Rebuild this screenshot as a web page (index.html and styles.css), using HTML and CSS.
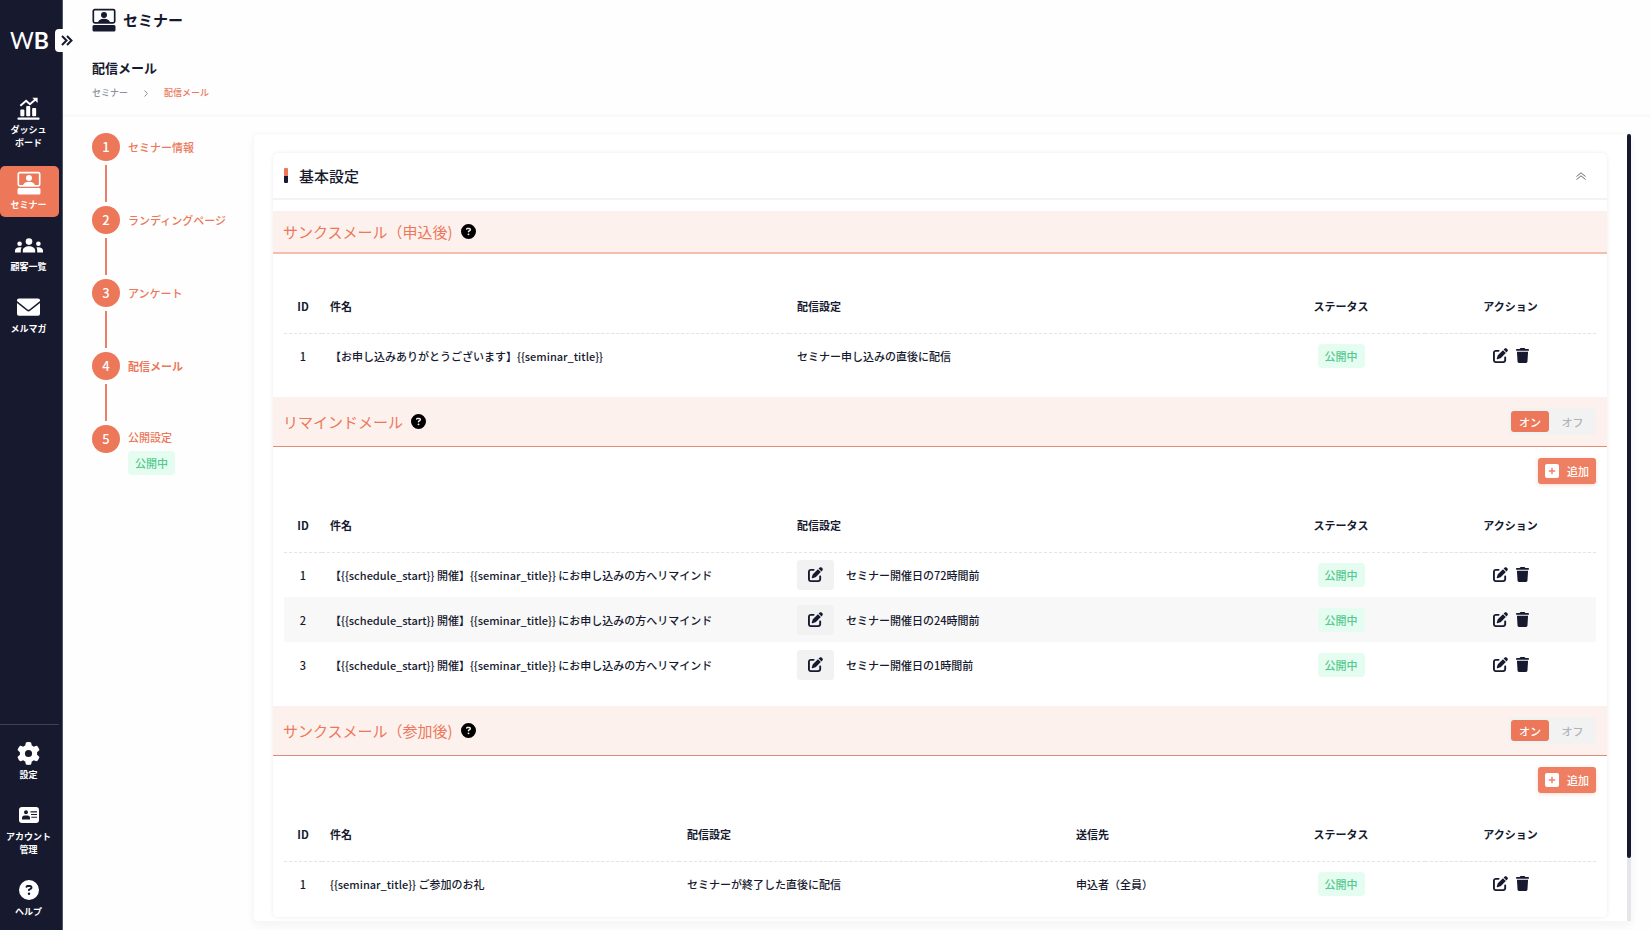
FILE: index.html
```html
<!DOCTYPE html>
<html lang="ja">
<head>
<meta charset="utf-8">
<meta name="viewport" content="width=device-width, initial-scale=1">
<title>配信メール</title>
<link rel="stylesheet" href="styles.css">
</head>
<body>
<svg class="sprite" aria-hidden="true">
  <symbol id="i-edit" viewBox="0 0 512 512"><path d="M471.6 21.7c-21.9-21.9-57.3-21.9-79.2 0L362.3 51.7l97.9 97.9 30.1-30.1c21.9-21.9 21.9-57.3 0-79.2L471.6 21.7zm-299.2 220c-6.1 6.1-10.8 13.6-13.5 21.9l-29.6 88.8c-2.9 8.6-.6 18.1 5.8 24.6s15.9 8.7 24.6 5.8l88.8-29.6c8.2-2.7 15.7-7.4 21.9-13.5L437.7 172.3 339.7 74.3 172.4 241.7zM96 64C43 64 0 107 0 160V416c0 53 43 96 96 96H352c53 0 96-43 96-96V320c0-17.7-14.3-32-32-32s-32 14.3-32 32v96c0 17.7-14.3 32-32 32H96c-17.7 0-32-14.3-32-32V160c0-17.7 14.3-32 32-32h96c17.7 0 32-14.3 32-32s-14.3-32-32-32H96z"/></symbol>
  <symbol id="i-trash" viewBox="0 0 448 512"><path d="M135.2 17.7L128 32H32C14.3 32 0 46.3 0 64S14.3 96 32 96H416c17.7 0 32-14.3 32-32s-14.3-32-32-32H320l-7.2-14.3C307.4 6.8 296.3 0 284.2 0H163.8c-12.1 0-23.2 6.8-28.6 17.7zM416 128H32L53.2 467c1.6 25.3 22.6 45 47.9 45H346.9c25.3 0 46.3-19.7 47.9-45L416 128z"/></symbol>
  <symbol id="i-gear" viewBox="0 0 512 512"><path d="M495.9 166.6c3.2 8.7 .5 18.4-6.4 24.6l-43.3 39.4c1.1 8.3 1.7 16.8 1.7 25.4s-.6 17.1-1.7 25.4l43.3 39.4c6.9 6.2 9.6 15.9 6.4 24.6c-4.4 11.9-9.7 23.3-15.8 34.3l-4.7 8.1c-6.6 11-14 21.4-22.1 31.2c-5.9 7.2-15.7 9.6-24.5 6.8l-55.7-17.7c-13.4 10.3-28.2 18.9-44 25.4l-12.5 57.1c-2 9.1-9 16.3-18.2 17.8c-13.8 2.3-28 3.5-42.5 3.5s-28.7-1.2-42.5-3.5c-9.2-1.5-16.2-8.7-18.2-17.8l-12.5-57.1c-15.8-6.5-30.6-15.1-44-25.4L83.1 425.9c-8.8 2.8-18.6 .3-24.5-6.8c-8.1-9.8-15.5-20.2-22.1-31.2l-4.7-8.1c-6.1-11-11.4-22.4-15.8-34.3c-3.2-8.7-.5-18.4 6.4-24.6l43.3-39.4C64.6 273.1 64 264.6 64 256s.6-17.1 1.7-25.4L22.4 191.2c-6.9-6.2-9.6-15.9-6.4-24.6c4.4-11.9 9.7-23.3 15.8-34.3l4.7-8.1c6.6-11 14-21.4 22.1-31.2c5.9-7.2 15.7-9.6 24.5-6.8l55.7 17.7c13.4-10.3 28.2-18.9 44-25.4l12.5-57.1c2-9.1 9-16.3 18.2-17.8C227.3 1.2 241.5 0 256 0s28.7 1.2 42.5 3.5c9.2 1.5 16.2 8.7 18.2 17.8l12.5 57.1c15.8 6.5 30.6 15.1 44 25.4l55.7-17.7c8.8-2.8 18.6-.3 24.5 6.8c8.1 9.8 15.5 20.2 22.1 31.2l4.7 8.1c6.1 11 11.4 22.4 15.8 34.3zM256 336a80 80 0 1 0 0-160 80 80 0 1 0 0 160z"/></symbol>
  <symbol id="i-help" viewBox="0 0 512 512"><path d="M256 512A256 256 0 1 0 256 0a256 256 0 1 0 0 512zM169.8 165.3c7.9-22.3 29.1-37.3 52.8-37.3h58.3c34.9 0 63.1 28.3 63.1 63.1c0 22.6-12.1 43.5-31.7 54.8L280 264.4c-.2 13-10.9 23.6-24 23.6c-13.3 0-24-10.7-24-24V250.5c0-8.6 4.6-16.5 12.1-20.8l44.3-25.4c4.7-2.7 7.6-7.7 7.6-13.1c0-8.4-6.8-15.1-15.1-15.1H222.6c-3.4 0-6.4 2.1-7.5 5.3l-.4 1.2c-4.4 12.5-18.2 19-30.6 14.6s-19-18.2-14.6-30.6l.4-1.2zM224 352a32 32 0 1 1 64 0 32 32 0 1 1 -64 0z"/></symbol>
  <symbol id="i-plus" viewBox="0 0 14 14"><path fill-rule="evenodd" d="M2 0h10a2 2 0 0 1 2 2v10a2 2 0 0 1-2 2H2a2 2 0 0 1-2-2V2a2 2 0 0 1 2-2zM6.3 3.8v2.5H3.8v1.4h2.5v2.5h1.4V7.7h2.5V6.3H7.7V3.8z"/></symbol>
  <symbol id="i-seminar" viewBox="0 0 24 24"><rect x="1.300" y="1.600" width="21.400" height="13.200" rx="1.500" fill="none" stroke="currentColor" stroke-width="1.700"/><circle cx="12" cy="6.900" r="3"/><path d="M5.800 15c.6-2.900 2.800-4.200 6.200-4.200s5.600 1.300 6.200 4.200z"/><rect x=".5" y="17" width="23" height="6.500" rx="1.500"/></symbol>
  <symbol id="i-chart" viewBox="0 0 24 24"><rect x="3.500" y="13" width="4.200" height="7" rx="1"/><rect x="9.600" y="9.500" width="4.200" height="10.500" rx="1"/><rect x="15.800" y="11.500" width="4.200" height="8.500" rx="1"/><rect x=".5" y="21.500" width="23" height="2.200" rx=".8"/><path d="M3.500 9.200l6-5.200 4 3.600 6-5.200" fill="none" stroke="currentColor" stroke-width="2"/><path d="M16 .8h5.500v5.500z"/></symbol>
  <symbol id="i-people" viewBox="0 0 28 15"><circle cx="14" cy="3.600" r="3.300"/><circle cx="4.600" cy="5.800" r="2.300"/><circle cx="23.400" cy="5.800" r="2.300"/><path d="M7.800 14.500v-2c0-2.600 2.800-4.200 6.200-4.200s6.200 1.600 6.200 4.200v2zM0 14.500v-2C0 10.500 2 9.200 4.600 9.200c.8 0 1.400.1 2 .3-.6 1-.8 2-.8 3v2zM28 14.500v-2c0-2-2-3.300-4.600-3.300-.8 0-1.400.1-2 .3.600 1 .8 2 .8 3v2z"/></symbol>
  <symbol id="i-mail" viewBox="0 0 24 18"><path d="M2 0h20a2 2 0 0 1 2 2v.8L12.900 11.600a1.500 1.500 0 0 1-1.800 0L0 2.800V2a2 2 0 0 1 2-2zM0 4.800l10.300 8.200a2.700 2.700 0 0 0 3.400 0L24 4.800V16a2 2 0 0 1-2 2H2a2 2 0 0 1-2-2z"/></symbol>
  <symbol id="i-card" viewBox="0 0 20 16"><path fill-rule="evenodd" d="M3 0h14a3 3 0 0 1 3 3v10a3 3 0 0 1-3 3H3a3 3 0 0 1-3-3V3a3 3 0 0 1 3-3zM7 3.300a2 2 0 1 0 0 4 2 2 0 0 0 0-4zM3 12.600h8V11a2.500 2.500 0 0 0-2.500-2.500h-3A2.500 2.500 0 0 0 3 11zM11.500 4.300v1.100H18V4.300zM12 7v1.100h6V7zM12.300 9.700v1.100H18V9.700z"/></symbol>
</svg>

<div class="app">
  <aside class="sidebar">
    <a class="logo" href="#"><span class="logo-thin">W</span><span class="logo-bold">B</span></a>
    <button class="sidebar-toggle" type="button" aria-label="メニューを開く">
      <svg viewBox="0 0 12 11" width="12" height="11" fill="none" stroke="currentColor" stroke-width="2"><path d="M1 1l4.500 4.500L1 10M6 1l4.500 4.500L6 10"/></svg>
    </button>
    <nav class="nav">
      <a class="nav-item" href="#"><span class="nav-icon"><svg width="23" height="23"><use href="#i-chart"/></svg></span>ダッシュ<br>ボード</a>
      <a class="nav-item active" href="#"><span class="nav-icon"><svg width="24" height="24"><use href="#i-seminar"/></svg></span>セミナー</a>
      <a class="nav-item" href="#"><span class="nav-icon"><svg width="28" height="15"><use href="#i-people"/></svg></span>顧客一覧</a>
      <a class="nav-item" href="#"><span class="nav-icon"><svg width="23" height="18"><use href="#i-mail"/></svg></span>メルマガ</a>
    </nav>
    <nav class="nav nav-bottom">
      <a class="nav-item" href="#"><span class="nav-icon"><svg width="23" height="23"><use href="#i-gear"/></svg></span>設定</a>
      <a class="nav-item" href="#"><span class="nav-icon"><svg width="20" height="16"><use href="#i-card"/></svg></span>アカウント<br>管理</a>
      <a class="nav-item" href="#"><span class="nav-icon"><svg width="20" height="20"><use href="#i-help"/></svg></span>ヘルプ</a>
    </nav>
  </aside>

  <div class="page">
    <header class="page-header">
      <div class="page-title"><svg width="24" height="24"><use href="#i-seminar"/></svg>セミナー</div>
      <h1>配信メール</h1>
      <nav class="crumbs">
        <a href="#">セミナー</a>
        <svg viewBox="0 0 4 7" width="4" height="7" fill="none" stroke="currentColor"><path d="M.5.5l3 3-3 3"/></svg>
        <a class="current" href="#">配信メール</a>
      </nav>
    </header>

    <div class="body">
      <ol class="steps">
        <li><span class="num">1</span><a href="#">セミナー情報</a></li>
        <li><span class="num">2</span><a href="#">ランディングページ</a></li>
        <li><span class="num">3</span><a href="#">アンケート</a></li>
        <li class="current"><span class="num">4</span><a href="#">配信メール</a></li>
        <li class="last"><span class="num">5</span><a href="#">公開設定</a><span class="badge">公開中</span></li>
      </ol>

      <main class="panel">
        <div class="panel-content">
          <div class="card">
            <div class="card-header">
              <span class="marker"></span>
              <h2>基本設定</h2>
              <button class="collapse" type="button" aria-label="折りたたむ">
                <svg viewBox="0 0 10 8" width="10" height="8" fill="none" stroke="currentColor"><path d="M.5 4.500L5 .8l4.500 3.700M.5 7.500L5 3.800l4.500 3.700"/></svg>
              </button>
            </div>

            <section>
              <div class="section-title short">
                <h3>サンクスメール（申込後)</h3>
                <svg class="help" width="15" height="15"><use href="#i-help"/></svg>
              </div>
              <div class="section-body">
                <table>
                  <colgroup><col class="c-id"><col class="c-subject"><col><col class="c-status"><col class="c-action"></colgroup>
                  <thead><tr><th class="mid">ID</th><th>件名</th><th>配信設定</th><th class="mid">ステータス</th><th class="mid">アクション</th></tr></thead>
                  <tbody>
                    <tr><td class="mid">1</td><td>【お申し込みありがとうございます】{{seminar_title}}</td><td>セミナー申し込みの直後に配信</td><td class="mid"><span class="badge">公開中</span></td><td class="mid"><div class="actions"><button type="button" aria-label="編集"><svg width="15" height="15"><use href="#i-edit"/></svg></button><button type="button" aria-label="削除"><svg width="13" height="15"><use href="#i-trash"/></svg></button></div></td></tr>
                  </tbody>
                </table>
              </div>
            </section>

            <section>
              <div class="section-title">
                <h3>リマインドメール</h3>
                <svg class="help" width="15" height="15"><use href="#i-help"/></svg>
                <div class="switch"><button class="on" type="button">オン</button><button type="button">オフ</button></div>
              </div>
              <div class="section-body with-add">
                <button class="add" type="button"><svg width="14" height="14"><use href="#i-plus"/></svg>追加</button>
                <table>
                  <colgroup><col class="c-id"><col class="c-subject"><col><col class="c-status"><col class="c-action"></colgroup>
                  <thead><tr><th class="mid">ID</th><th>件名</th><th>配信設定</th><th class="mid">ステータス</th><th class="mid">アクション</th></tr></thead>
                  <tbody>
                    <tr><td class="mid">1</td><td>【{{schedule_start}} 開催】{{seminar_title}} にお申し込みの方へリマインド</td><td><div class="timing"><button type="button" aria-label="配信設定を編集"><svg width="15" height="15"><use href="#i-edit"/></svg></button>セミナー開催日の72時間前</div></td><td class="mid"><span class="badge">公開中</span></td><td class="mid"><div class="actions"><button type="button" aria-label="編集"><svg width="15" height="15"><use href="#i-edit"/></svg></button><button type="button" aria-label="削除"><svg width="13" height="15"><use href="#i-trash"/></svg></button></div></td></tr>
                    <tr><td class="mid">2</td><td>【{{schedule_start}} 開催】{{seminar_title}} にお申し込みの方へリマインド</td><td><div class="timing"><button type="button" aria-label="配信設定を編集"><svg width="15" height="15"><use href="#i-edit"/></svg></button>セミナー開催日の24時間前</div></td><td class="mid"><span class="badge">公開中</span></td><td class="mid"><div class="actions"><button type="button" aria-label="編集"><svg width="15" height="15"><use href="#i-edit"/></svg></button><button type="button" aria-label="削除"><svg width="13" height="15"><use href="#i-trash"/></svg></button></div></td></tr>
                    <tr><td class="mid">3</td><td>【{{schedule_start}} 開催】{{seminar_title}} にお申し込みの方へリマインド</td><td><div class="timing"><button type="button" aria-label="配信設定を編集"><svg width="15" height="15"><use href="#i-edit"/></svg></button>セミナー開催日の1時間前</div></td><td class="mid"><span class="badge">公開中</span></td><td class="mid"><div class="actions"><button type="button" aria-label="編集"><svg width="15" height="15"><use href="#i-edit"/></svg></button><button type="button" aria-label="削除"><svg width="13" height="15"><use href="#i-trash"/></svg></button></div></td></tr>
                  </tbody>
                </table>
              </div>
            </section>

            <section>
              <div class="section-title">
                <h3>サンクスメール（参加後)</h3>
                <svg class="help" width="15" height="15"><use href="#i-help"/></svg>
                <div class="switch"><button class="on" type="button">オン</button><button type="button">オフ</button></div>
              </div>
              <div class="section-body with-add final">
                <button class="add" type="button"><svg width="14" height="14"><use href="#i-plus"/></svg>追加</button>
                <table>
                  <colgroup><col class="c-id"><col class="c-subject-narrow"><col class="c-delivery"><col><col class="c-status"><col class="c-action"></colgroup>
                  <thead><tr><th class="mid">ID</th><th>件名</th><th>配信設定</th><th>送信先</th><th class="mid">ステータス</th><th class="mid">アクション</th></tr></thead>
                  <tbody>
                    <tr><td class="mid">1</td><td>{{seminar_title}} ご参加のお礼</td><td>セミナーが終了した直後に配信</td><td>申込者（全員）</td><td class="mid"><span class="badge">公開中</span></td><td class="mid"><div class="actions"><button type="button" aria-label="編集"><svg width="15" height="15"><use href="#i-edit"/></svg></button><button type="button" aria-label="削除"><svg width="13" height="15"><use href="#i-trash"/></svg></button></div></td></tr>
                  </tbody>
                </table>
              </div>
            </section>
          </div>
        </div>
        <div class="track"><div class="thumb"></div></div>
      </main>
    </div>
  </div>
</div>
</body>
</html>
```
FILE: styles.css
```css
:root {
  --navy: #171a2f;
  --orange: #ec7759;
  --tint: #fdf1ee;
}

* { box-sizing: border-box; }

body {
  margin: 0;
  background: #fefefe;
  color: var(--navy);
  font-family: "Noto Sans CJK JP", sans-serif;
  font-size: 11px;
  font-weight: 500;
  line-height: 16px;
}

svg { display: block; flex: none; fill: currentColor; }
svg[fill="none"] { fill: none; }
.sprite { display: none; }
a { color: inherit; text-decoration: none; }
h1, h2, h3 { margin: 0; }
button {
  display: flex;
  align-items: center;
  justify-content: center;
  padding: 0;
  border: 0;
  background: none;
  color: inherit;
  font: inherit;
}

.app { display: flex; min-height: 100vh; }

/* Sidebar */
.sidebar {
  position: relative;
  display: flex;
  flex: none;
  flex-direction: column;
  width: 63px;
  padding-bottom: 6px;
  background: var(--navy);
  border-right: 1px solid #4d5665;
  color: #fff;
}
.logo {
  display: flex;
  margin: 26px 0 36px;
  padding-left: 10px;
  font-family: Lato, sans-serif;
  font-size: 23px;
  line-height: 29px;
}
.logo-thin { font-weight: 400; }
.logo-bold { font-weight: 700; }
.sidebar-toggle {
  position: absolute;
  top: 29px;
  right: -12px;
  width: 19px;
  height: 23px;
  padding-left: 4px;
  border-radius: 4px;
  background: #fff;
  color: var(--navy);
}
.nav { display: flex; flex-direction: column; gap: 11px; padding-right: 3px; }
.nav-bottom { margin-top: auto; padding-top: 10px; }
.nav-bottom::before {
  content: "";
  height: 1px;
  margin-top: -10px;
  background: #3d4256;
}
.nav-item {
  padding: 5px 2px 6px 0;
  font-size: 9px;
  font-weight: 700;
  line-height: 13px;
  text-align: center;
}
.nav-item.active { background: var(--orange); border-radius: 5px; }
.nav-icon {
  display: flex;
  align-items: center;
  justify-content: center;
  height: 24px;
  margin-bottom: 3px;
}

/* Page header */
.page { display: flex; flex: 1; flex-direction: column; min-width: 0; }
.page-header {
  padding: 8px 29px 14px;
  border-bottom: 3px solid #f9f9f9;
}
.page-title {
  display: flex;
  align-items: center;
  gap: 7px;
  font-size: 15px;
  font-weight: 700;
  line-height: 24px;
}
h1 { margin-top: 26px; font-size: 13px; font-weight: 700; line-height: 20px; }
.crumbs {
  display: flex;
  align-items: center;
  gap: 16px;
  margin-top: 8px;
  color: #8d909c;
  font-size: 9px;
  line-height: 14px;
}
.crumbs .current { color: var(--orange); }

/* Steps */
.body { display: flex; flex: 1; padding: 16px 19px 8px 29px; }
.steps { flex: none; width: 161px; margin: 0; padding: 0; list-style: none; }
.steps li {
  display: grid;
  grid-template-columns: 28px 1fr;
  column-gap: 8px;
  align-content: start;
  height: 73px;
  color: var(--orange);
  line-height: 28px;
}
.steps li:not(:last-child)::after {
  content: "";
  width: 2px;
  height: 37px;
  margin: 4px auto;
  background: #ea8069;
}
.steps .num {
  height: 28px;
  border-radius: 50%;
  background: var(--orange);
  color: #fff;
  font-size: 13px;
  text-align: center;
}
.steps .current a { font-weight: 700; }
.steps .last { row-gap: 10px; }
.steps .last .num { grid-row: span 2; }
.steps .last a { line-height: 24px; height: 16px; }
.steps .last .badge { justify-self: start; }

.badge {
  display: inline-block;
  padding: 0 7px;
  border-radius: 4px;
  background: #e4fdf0;
  color: #55c98e;
  line-height: 24px;
}

/* Main panel */
.panel {
  display: flex;
  flex: 1;
  min-width: 0;
  border: 1px solid #f7f7f7;
  border-right: 0;
  border-radius: 5px 0 0 5px;
  background: #fff;
  box-shadow: 0 4px 10px #f4f4f5;
}
.panel-content { flex: 1; min-width: 0; padding: 19px 20px 4px 19px; }
.track { flex: none; width: 4px; background: #e6e6ea; }
.thumb { height: 92%; border-radius: 2px; background: var(--navy); }
.card {
  border-radius: 5px;
  background: #fff;
  box-shadow: 0 0 4px #ececee;
}
.card-header {
  display: flex;
  align-items: center;
  height: 47px;
  margin-bottom: 11px;
  padding: 0 21px 0 11px;
  border-bottom: 2px solid #f3f3f4;
}
.marker {
  width: 4px;
  height: 15px;
  margin-right: 11px;
  border-radius: 1px;
  background: linear-gradient(var(--orange) 50%, var(--navy) 50%);
}
h2, h3 { font-size: 15px; font-weight: 500; line-height: 22px; }
.collapse { margin-left: auto; color: #686b76; }

.section-title {
  display: flex;
  align-items: center;
  height: 50px;
  padding: 0 11px 0 10px;
  border-bottom: 1px solid #df8d78;
  background: var(--tint);
}
.section-title.short { height: 43px; border-bottom: 2px solid #f3bfae; }
.section-title h3 { color: var(--orange); font-weight: 400; }
.help { margin-left: 8px; color: #000; }
.switch {
  display: flex;
  margin-left: auto;
  padding: 3px;
  border-radius: 4px;
  background: #f3f2f2;
}
.switch button {
  width: 38px;
  height: 21px;
  border-radius: 3px;
  color: #b1b3ba;
}
.switch button + button { width: 44px; padding-left: 3px; }
.switch .on { background: var(--orange); color: #fff; }

.section-body {
  display: flex;
  flex-direction: column;
  padding: 26px 11px 19px;
}
.section-body.with-add { padding-top: 11px; }
.section-body.final { padding-bottom: 11px; }
.add {
  align-self: flex-end;
  gap: 8px;
  height: 26px;
  margin-bottom: 15px;
  padding: 0 7px;
  border-radius: 3px;
  background: #ef7f62;
  box-shadow: 0 1px 4px #f7d9d0;
  color: #fff;
}

/* Tables */
table { width: 100%; border-collapse: collapse; table-layout: fixed; }
.c-id { width: 38px; }
.c-subject { width: 467px; }
.c-subject-narrow { width: 357px; }
.c-delivery { width: 389px; }
.c-status { width: 168px; }
.c-action { width: 171px; }
th, td { padding: 0 8px; text-align: left; }
th { height: 53px; border-bottom: 1px dashed #e4e4e7; font-weight: 700; }
td { height: 45px; }
th.mid, td.mid { text-align: center; }
tbody tr:nth-child(even) { background: #f8f8f8; }
.timing { display: flex; align-items: center; gap: 12px; }
.timing button {
  width: 37px;
  height: 30px;
  border-radius: 3px;
  background: #f2f2f3;
}
.actions { display: flex; justify-content: center; gap: 8px; }
```
